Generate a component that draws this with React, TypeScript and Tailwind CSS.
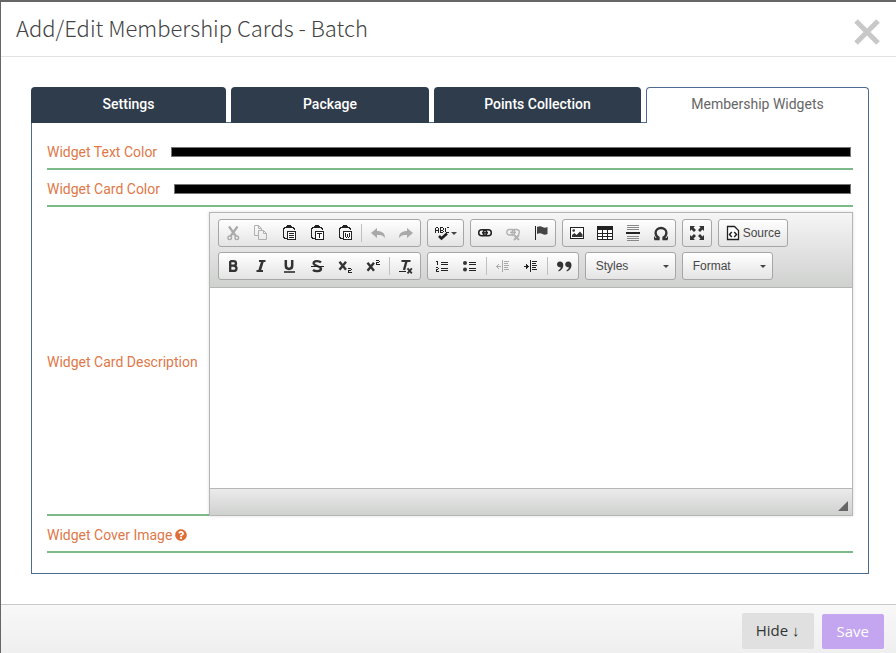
import { useState, type ReactNode } from "react";
import { FaQuestionCircle } from "react-icons/fa";

const tabs = ["Settings", "Package", "Points Collection", "Membership Widgets"];

type IconProps = { children: ReactNode; width?: number };

function Icon({ children, width = 16 }: IconProps) {
  return (
    <svg
      width={width}
      height="16"
      viewBox={`0 0 ${width} 16`}
      fill="none"
      stroke="#222"
      aria-hidden="true"
    >
      {children}
    </svg>
  );
}

// clipboard with a small page on top, the page content changes per button
function Clipboard({ children }: { children: ReactNode }) {
  return (
    <Icon>
      <g shapeRendering="crispEdges">
        <path d="M5.5 13.5H3.5V12.5H2.5V3.5H3.5V2.5H5 M11 2.5H12.5V3.5H13.5V5" />
        <path d="M5 1h1V0h4v1h1v2H5z" fill="#222" stroke="none" />
        <path d="M6.5 6.5h8v8h-8z" fill="#fff" />
        {children}
      </g>
    </Icon>
  );
}

const icons = {
  cut: (
    <Icon>
      <path
        d="M4 1.5L10.8 11 M12.500 1.500L5.700 11"
        stroke="#aaa"
        strokeWidth="2.200"
      />
      <circle cx="4.700" cy="12.800" r="1.800" stroke="#aaa" strokeWidth="1.400" />
      <circle cx="11.800" cy="12.800" r="1.800" stroke="#aaa" strokeWidth="1.400" />
    </Icon>
  ),
  copy: (
    <Icon>
      <g stroke="#b0b0b0">
        <path d="M5 10.5H1.5V.5h4l3 3V5 M5.5 .5v3h3" />
        <path d="M5.5 5.5h5l3 3v6h-8z M10.5 5.5v3h3" />
      </g>
    </Icon>
  ),
  paste: (
    <Clipboard>
      <path d="M8 8.5h5M8 10.5h5M8 12.5h5" />
    </Clipboard>
  ),
  pasteText: (
    <Clipboard>
      <path d="M8 8.5h5M10.5 9v4" />
    </Clipboard>
  ),
  pasteWord: (
    <Clipboard>
      <path d="M8.500 8v4M10.500 9v3M12.500 8v4M9 12.500h1M11 12.500h1" />
    </Clipboard>
  ),
  undo: (
    <Icon>
      <path
        d="M1 8l6-5v3c5 0 8 2 8 7-2-2.500-4-3-8-3v3z"
        fill="#aaa"
        stroke="none"
      />
    </Icon>
  ),
  redo: (
    <Icon>
      <path
        d="M15 8L9 3v3c-5 0-8 2-8 7 2-2.500 4-3 8-3v3z"
        fill="#aaa"
        stroke="none"
      />
    </Icon>
  ),
  spell: (
    <Icon width={23}>
      <g shapeRendering="crispEdges">
        <path d="M1.500 8V3M2 2.500h2M4.500 3v5M2 5.500h2" />
        <path d="M6.500 2v6M7 2.500h2M7 5.500h2M7 7.500h2M9.500 3v2M9.500 6v1" />
        <path d="M14.500 2.500h-2M11.500 3v4M12 7.500h2.500" />
      </g>
      <path d="M5 11l2.500 2.500L13 8.500" strokeWidth="2.600" />
      <path d="M17 7h6l-3 3z" fill="#444" stroke="none" />
    </Icon>
  ),
  link: (
    <Icon>
      <rect x="1.700" y="4.800" width="8" height="6" rx="3" strokeWidth="1.500" />
      <rect x="6.300" y="4.800" width="8" height="6" rx="3" strokeWidth="1.500" />
      <path d="M5 7.800h6" strokeWidth="1.500" />
    </Icon>
  ),
  unlink: (
    <Icon>
      <g stroke="#b0b0b0" strokeWidth="1.300">
        <rect x="1.700" y="4.500" width="8" height="5.500" rx="2.700" />
        <path d="M8 10.500c-2-2-1-6 1.500-6h2c3.500 0 3.500 4 1.500 5M5 7.300h6" />
        <path d="M9 10l5 5M14 10l-5 5" strokeWidth="1.800" />
      </g>
    </Icon>
  ),
  flag: (
    <Icon>
      <path d="M2.500 1v14" shapeRendering="crispEdges" />
      <path
        d="M4 2c2-1.300 4-1 5.500 0s3 1 5 0v7c-2 1-3.500 1-5 0s-3.500-1-5.500 0z"
        fill="#444"
        stroke="none"
      />
    </Icon>
  ),
  image: (
    <Icon>
      <path d="M1.500 2.500h13v11h-13z" fill="#fff" shapeRendering="crispEdges" />
      <circle cx="4.700" cy="5.500" r="1.300" fill="#333" stroke="none" />
      <path d="M3 12V10l2.500-2 2 2L11 6.500l2.500 3V12z" fill="#333" stroke="none" />
    </Icon>
  ),
  table: (
    <Icon>
      <g shapeRendering="crispEdges">
        <path d="M.5 1.500h15v13H.5z" fill="#fff" />
        <path d="M0 1h16v4H0z" fill="#222" stroke="none" />
        <path d="M5.500 5v10M10.500 5v10M1 8.500h14M1 11.500h14" />
      </g>
    </Icon>
  ),
  rule: (
    <Icon>
      <g shapeRendering="crispEdges">
        <path
          d="M2 .5h12M2 2.500h12M2 4.500h12M2 11.500h12M2 13.500h12M2 15.500h12"
          stroke="#888"
        />
        <path d="M1 8h14" strokeWidth="2" />
      </g>
    </Icon>
  ),
  omega: (
    <Icon>
      <path
        d="M1.500 14H5.500v-1.500C3.500 11.500 2.600 9.800 2.600 7.800 2.600 4.800 5 3 8 3s5.400 1.800 5.400 4.800c0 2-.9 3.700-2.900 4.700V14h4"
        stroke="#333"
        strokeWidth="2.300"
      />
      <path d="M1.500 11.500v3M14.500 11.500v3" stroke="#333" />
    </Icon>
  ),
  maximize: (
    <Icon>
      <path
        d="M1 1h5L4.500 2.500 7 5 5 7 2.500 4.500 1 6zM15 1v5l-1.500-1.500L11 7 9 5l2.500-2.500L10 1zM1 15v-5l1.500 1.500L5 9l2 2-2.500 2.500L6 15zM15 15h-5l1.500-1.500L9 11l2-2 2.500 2.500L15 10z"
        fill="#333"
        stroke="none"
      />
    </Icon>
  ),
  source: (
    <Icon>
      <path d="M2.500 1.500h7l4 4v9h-11z" fill="#fff" strokeWidth="1.300" />
      <path d="M6.800 7L4.500 9.500l2.300 2.500M9.200 7l2.300 2.500L9.200 12" strokeWidth="1.500" />
    </Icon>
  ),
  bold: (
    <Icon>
      <path
        d="M5.200 3.100H8.500c3.300 0 3.300 4.600 0 4.600H5.500M8.500 7.900c4 0 4 5 0 5H5.200V3"
        stroke="#333"
        strokeWidth="2.300"
      />
    </Icon>
  ),
  italic: (
    <Icon>
      <path d="M6 3h6.500M3.500 13h6.500" stroke="#333" strokeWidth="1.800" />
      <path d="M9.600 3L6.500 13" stroke="#333" strokeWidth="2.600" />
    </Icon>
  ),
  underline: (
    <Icon>
      <path d="M4.800 2v5.500c0 4.500 6.400 4.500 6.400 0V2" stroke="#333" strokeWidth="2.500" />
      <path d="M3 14h11" strokeWidth="1.500" />
    </Icon>
  ),
  strike: (
    <Icon>
      <path
        d="M12 4.400C10.200 2.700 4.600 2.400 4.600 5.200S12 8 12 10.800s-6 3-8 1"
        stroke="#333"
        strokeWidth="2.400"
      />
      <path d="M2 8.500h13" shapeRendering="crispEdges" />
    </Icon>
  ),
  sub: (
    <Icon>
      <path d="M2.500 3.800l6.500 8M9 3.800l-6.500 8" stroke="#333" strokeWidth="2.400" />
      <path
        d="M11 10.500h3M14.500 11v1M11 12.500h3M11.500 13v1M11 14.500h4"
        shapeRendering="crispEdges"
      />
    </Icon>
  ),
  sup: (
    <Icon>
      <path d="M2.500 4.800l6.500 8M9 4.800l-6.500 8" stroke="#333" strokeWidth="2.400" />
      <path
        d="M11 2.500h3M14.500 3v1M11 4.500h3M11.500 5v1M11 6.500h4"
        shapeRendering="crispEdges"
      />
    </Icon>
  ),
  clear: (
    <Icon>
      <path d="M3.500 3h9" stroke="#333" strokeWidth="2" />
      <path d="M8.500 3L6 12" stroke="#333" strokeWidth="2.400" />
      <path d="M1 13.500h7" shapeRendering="crispEdges" />
      <path d="M9.500 10.300l4.300 5M13.800 10.300l-4.300 5" stroke="#333" strokeWidth="1.800" />
    </Icon>
  ),
  numbered: (
    <Icon>
      <g shapeRendering="crispEdges">
        <path d="M2 3.500h1M3.500 3v4M2 9.500h2M4.500 10v1M2 11.500h2M2.500 12v1M2 13.500h3" />
        <path d="M7 4.500h7M7 6.500h7M7 10.500h7M7 12.500h7" />
      </g>
    </Icon>
  ),
  bulleted: (
    <Icon>
      <circle cx="3" cy="5" r="2" fill="#333" stroke="none" />
      <circle cx="3" cy="11.500" r="2" fill="#333" stroke="none" />
      <path
        d="M7 4.500h7M7 6.500h7M7 10.500h7M7 12.500h7"
        shapeRendering="crispEdges"
      />
    </Icon>
  ),
  outdent: (
    <Icon>
      <g stroke="#aaa" shapeRendering="crispEdges">
        <path d="M1 8.500h5M2.500 7v3M3.500 6v1M3.500 10v1" />
        <path d="M7.500 2v12M9 3.500h5M9 5.500h4M9 7.500h5M9 9.500h4M9 11.500h5" />
      </g>
    </Icon>
  ),
  indent: (
    <Icon>
      <g shapeRendering="crispEdges">
        <path d="M1 8.500h5M4.500 7v3M3.500 6v5" />
        <path d="M7.500 2v12M9 3.500h5M9 5.500h4M9 7.500h5M9 9.500h4M9 11.500h5" />
      </g>
    </Icon>
  ),
  quote: (
    <Icon>
      <g fill="#333" stroke="none">
        <path d="M4 3.500c2 0 3.300 1.300 3.300 3.500 0 3-1.800 5.600-4.800 6.500v-1.500C4 11.200 4.700 10.300 4.700 9.200 2.500 9.700 1 8.200 1 6.300 1 4.600 2.300 3.500 4 3.500z" />
        <path d="M12.200 3.500c2 0 3.300 1.300 3.300 3.500 0 3-1.800 5.600-4.800 6.500v-1.500c1.500-.8 2.200-1.700 2.200-2.800-2.200.5-3.700-1-3.700-2.900 0-1.700 1.300-2.800 3-2.800z" />
      </g>
    </Icon>
  ),
};

type IconName = keyof typeof icons;

function ToolButton({ name, text }: { name: IconName; text?: string }) {
  return (
    <button
      type="button"
      aria-label={text ?? name}
      className="h-[26px] px-[6px] flex items-center gap-[2px] shrink-0 text-xs text-[#474747]"
    >
      {icons[name]}
      {text && <span>{text}</span>}
    </button>
  );
}

function ToolGroup({ items }: { items: (IconName | "|")[] }) {
  return (
    <div className="flex items-center border border-[#a6a6a6] rounded-[3px] bg-linear-to-b from-white to-[#e4e4e4]">
      {items.map((item, i) =>
        item === "|" ? (
          <span key={i} className="w-px h-[18px] mx-[2px] bg-[#c0c0c0]" />
        ) : (
          <ToolButton key={i} name={item} />
        ),
      )}
    </div>
  );
}

function ToolSelect({ label }: { label: string }) {
  return (
    <div className="relative flex">
      <select
        aria-label={label}
        className="appearance-none w-[91px] h-7 pl-[10px] text-xs text-[#474747] border border-[#a6a6a6] rounded-[3px] bg-linear-to-b from-white to-[#e4e4e4]"
      >
        <option>{label}</option>
      </select>
      <svg
        className="absolute right-[7px] top-[13px] pointer-events-none"
        width="6"
        height="3"
        viewBox="0 0 6 3"
      >
        <path d="M0 0h6L3 3z" fill="#444" />
      </svg>
    </div>
  );
}

function Editor() {
  return (
    <div className="flex-1 min-w-0 mt-[5px] border border-[#b6b6b6] shadow-[0_0_3px_rgba(0,0,0,0.15)] font-['Liberation_Sans',sans-serif]">
      <div className="flex flex-col gap-[5px] px-2 pt-[6px] pb-[7px] border-b border-[#b6b6b6] bg-linear-to-b from-[#f5f5f5] to-[#cfd1cf]">
        <div className="flex flex-wrap gap-[6px]">
          <ToolGroup
            items={["cut", "copy", "paste", "pasteText", "pasteWord", "|", "undo", "redo"]}
          />
          <ToolGroup items={["spell"]} />
          <ToolGroup items={["link", "unlink", "flag"]} />
          <ToolGroup items={["image", "table", "rule", "omega"]} />
          <ToolGroup items={["maximize"]} />
          <div className="flex border border-[#a6a6a6] rounded-[3px] bg-linear-to-b from-white to-[#e4e4e4]">
            <ToolButton name="source" text="Source" />
          </div>
        </div>
        <div className="flex flex-wrap gap-[6px]">
          <ToolGroup
            items={["bold", "italic", "underline", "strike", "sub", "sup", "|", "clear"]}
          />
          <ToolGroup
            items={["numbered", "bulleted", "|", "outdent", "indent", "|", "quote"]}
          />
          <ToolSelect label="Styles" />
          <ToolSelect label="Format" />
        </div>
      </div>
      <textarea
        id="description"
        className="block w-full h-[200px] p-5 text-[13px] bg-white resize-none outline-none"
      />
      <div className="h-[27px] flex justify-end items-end px-1 pb-1 border-t border-[#b6b6b6] bg-linear-to-b from-[#ebebeb] to-[#cfd1cf]">
        <svg width="10" height="10" viewBox="0 0 10 10">
          <path d="M10 0v10H0z" fill="#666" />
        </svg>
      </div>
    </div>
  );
}

function ColorRow({ id, label }: { id: string; label: string }) {
  const [color, setColor] = useState("#000000");

  return (
    <div className="h-[37px] flex items-center gap-[14px] pt-[3px] pr-[2px] border-b-2 border-[#7dba8a]">
      <label htmlFor={id} className="shrink-0">
        {label}
      </label>
      <input
        id={id}
        type="color"
        value={color}
        onChange={(e) => setColor(e.target.value)}
        className="flex-1 min-w-0 h-[10px] appearance-none border border-[#767676] [&::-webkit-color-swatch-wrapper]:p-0 [&::-webkit-color-swatch]:border-0"
      />
    </div>
  );
}

export default function App() {
  const [active, setActive] = useState(3);

  return (
    <div className="min-h-screen flex flex-col bg-white border-t-2 border-l border-[#666] font-[Roboto,sans-serif] text-sm">
      <header className="h-[55px] flex items-center justify-between pl-[15px] pr-4 border-b border-[#e2e2e2]">
        <h1 className="pb-1 font-['Noto_Sans_CJK_SC',sans-serif] font-light text-[22px] leading-8 text-[#444]">
          Add/Edit Membership Cards - Batch
        </h1>
        <button type="button" aria-label="Close" className="pt-[6px]">
          <svg width="26" height="26" viewBox="0 0 26 26">
            <path d="M2 2l22 22M24 2L2 24" stroke="#c8c8c8" strokeWidth="5" />
          </svg>
        </button>
      </header>

      <main className="flex-1 pl-[30px] pr-[27px] pt-[30px] pb-[30px]">
        <div role="tablist" className="grid grid-cols-[195fr_198fr_207fr_223fr] gap-[5px]">
          {tabs.map((tab, i) => (
            <button
              key={tab}
              type="button"
              role="tab"
              aria-selected={i === active}
              onClick={() => setActive(i)}
              className={
                i === active
                  ? "relative z-10 h-9 pb-[3px] rounded-t border border-b-0 border-[#4d6a91] bg-white text-[#666]"
                  : "h-9 pb-[2px] rounded-t bg-[#2f3c4c] text-white font-medium"
              }
            >
              {tab}
            </button>
          ))}
        </div>

        <section className="-mt-px px-[15px] pt-[10px] pb-5 border border-[#4d6a91] text-[#de7849]">
          <ColorRow id="text-color" label="Widget Text Color" />
          <ColorRow id="card-color" label="Widget Card Color" />
          <div className="flex">
            <label
              htmlFor="description"
              className="flex items-center shrink-0 pt-[2px] pr-[11px] border-b-2 border-[#7dba8a]"
            >
              Widget Card Description
            </label>
            <Editor />
          </div>
          <div className="h-[37px] flex items-center gap-[3px] pt-[3px] border-b-2 border-[#7dba8a]">
            <span>Widget Cover Image</span>
            <FaQuestionCircle size={12} color="#de6f38" />
          </div>
        </section>
      </main>

      <footer className="flex items-end justify-end gap-2 pt-2 pb-1 pr-3 border-t border-[#c8c8c8] bg-linear-to-b from-[#f8f8f8] to-[#efefef] font-['Open_Sans',sans-serif] text-[15px]">
        <button type="button" className="h-9 px-[14px] rounded-xs bg-[#e0e0e0] text-[#333]">
          Hide ↓
        </button>
        <button type="button" className="h-[35px] px-[15px] rounded-xs bg-[#c3a5f0] text-white">
          Save
        </button>
      </footer>
    </div>
  );
}
